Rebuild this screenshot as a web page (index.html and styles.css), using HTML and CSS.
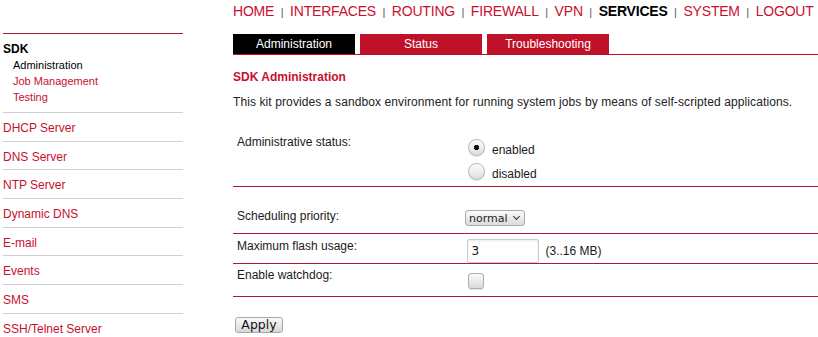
FILE: index.html
```html
<!DOCTYPE html>
<html lang="en">

<head>
    <meta charset="UTF-8">
    <meta name="viewport" content="width=device-width, initial-scale=1.0">
    <title>SDK Administration</title>
    <link rel="stylesheet" href="styles.css">
</head>

<body>
    <div class="page">
        <aside class="sidebar">
            <div class="menu-group">
                <div class="group-title">SDK</div>
                <a class="sub-item active" href="#">Administration</a>
                <a class="sub-item" href="#">Job Management</a>
                <a class="sub-item" href="#">Testing</a>
            </div>
            <a class="menu-item" href="#">DHCP Server</a>
            <a class="menu-item" href="#">DNS Server</a>
            <a class="menu-item" href="#">NTP Server</a>
            <a class="menu-item" href="#">Dynamic DNS</a>
            <a class="menu-item" href="#">E-mail</a>
            <a class="menu-item" href="#">Events</a>
            <a class="menu-item" href="#">SMS</a>
            <a class="menu-item" href="#">SSH/Telnet Server</a>
        </aside>

        <main class="content">
            <nav class="topnav">
                <a href="#">HOME</a><span class="sep">|</span>
                <a href="#">INTERFACES</a><span class="sep">|</span>
                <a href="#">ROUTING</a><span class="sep">|</span>
                <a href="#">FIREWALL</a><span class="sep">|</span>
                <a href="#">VPN</a><span class="sep">|</span>
                <a class="current" href="#">SERVICES</a><span class="sep">|</span>
                <a href="#">SYSTEM</a><span class="sep">|</span>
                <a href="#">LOGOUT</a>
            </nav>

            <div class="tabs">
                <a class="tab active" href="#">Administration</a>
                <a class="tab" href="#">Status</a>
                <a class="tab" href="#">Troubleshooting</a>
            </div>

            <h2>SDK Administration</h2>
            <p class="intro">This kit provides a sandbox environment for running system jobs by means of self-scripted applications.</p>

            <form class="settings">
                <div class="row row-status">
                    <label class="row-label">Administrative status:</label>
                    <div class="row-value options">
                        <label class="option"><input type="radio" name="status" checked> enabled</label>
                        <label class="option"><input type="radio" name="status"> disabled</label>
                    </div>
                </div>

                <div class="row row-priority">
                    <label class="row-label">Scheduling priority:</label>
                    <div class="row-value">
                        <span class="select-wrap">
                            <select>
                                <option>normal</option>
                                <option>high</option>
                                <option>low</option>
                            </select>
                        </span>
                    </div>
                </div>

                <div class="row row-flash">
                    <label class="row-label">Maximum flash usage:</label>
                    <div class="row-value inline">
                        <input type="text" value="3">
                        <span class="hint">(3..16 MB)</span>
                    </div>
                </div>

                <div class="row row-watchdog">
                    <label class="row-label">Enable watchdog:</label>
                    <div class="row-value">
                        <input type="checkbox">
                    </div>
                </div>

                <button type="submit">Apply</button>
            </form>
        </main>
    </div>
</body>

</html>
```

FILE: styles.css
```css
:root {
    --red: #c8102e;
    --red-dark: #b3172e;
    --tab-red: #bf1229;
    --text: #1a1a1a;
    --gray-line: #cfcfcf;
    --widget-border: #a9a9a9;
}

body {
    font-family: "Liberation Sans", Arial, sans-serif;
    background-color: #fff;
    color: var(--text);
    margin: 0;
    padding: 0;
}

a {
    text-decoration: none;
    color: var(--red);
}

.page {
    display: flex;
    width: 818px;
}

/* left menu */

.sidebar {
    width: 180px;
    margin-left: 3px;
    padding-top: 33px;
    font-size: 12px;
}

.menu-group {
    border-top: 1px solid var(--red-dark);
    border-bottom: 1px solid var(--gray-line);
    padding: 7.5px 0 7px;
}

.group-title {
    font-weight: bold;
    line-height: 14px;
    color: #000;
    margin-bottom: 1.5px;
}

.sub-item {
    display: block;
    padding-left: 10px;
    font-size: 11px;
    line-height: 16px;
}

.sub-item.active {
    color: #000;
}

.menu-item {
    display: block;
    line-height: 14px;
    padding: 8px 0 5.7px;
    border-bottom: 1px solid var(--gray-line);
}

/* main column */

.content {
    margin-left: 50px;
    width: 585px;
}

.topnav {
    display: flex;
    align-items: baseline;
    padding-top: 1.5px;
    font-size: 14px;
    line-height: 18px;
    letter-spacing: -0.2px;
    white-space: nowrap;
}

.topnav .current {
    color: #000;
    font-weight: bold;
}

.topnav .sep {
    font-size: 11px;
    letter-spacing: 0;
    color: #555;
    margin: 0 6.5px;
}

.tabs {
    display: flex;
    gap: 5px;
    margin-top: 13.5px;
    border-bottom: 1px solid var(--tab-red);
}

.tab {
    width: 122px;
    height: 20px;
    line-height: 20px;
    text-align: center;
    font-size: 12px;
    color: #fff;
    background-color: var(--tab-red);
}

.tab.active {
    background-color: #000;
}

h2 {
    font-size: 12px;
    line-height: 14px;
    color: var(--red);
    margin: 14.5px 0 0;
}

.intro {
    font-size: 12px;
    line-height: 14px;
    letter-spacing: 0.1px;
    color: #222;
    margin: 11px 0 0;
}

/* settings form */

.settings {
    margin-top: 21.3px;
    font-size: 12px;
}

.row {
    display: flex;
    align-items: flex-start;
    padding-top: 5px;
    border-bottom: 1px solid var(--red-dark);
}

.row-label {
    width: 228px;
    padding-left: 4px;
    line-height: 14px;
}

.row-status .options {
    padding-top: 3.4px;
}

.option {
    display: flex;
    align-items: center;
    height: 24px;
}

input[type="radio"] {
    appearance: none;
    width: 17px;
    height: 17px;
    margin: 0 7px 6px 3px;
    border: 1px solid #b4b4b4;
    border-radius: 50%;
    background: linear-gradient(#fdfdfd, #dedede);
    box-shadow: 0 1px 1px rgba(0, 0, 0, 0.12);
}

input[type="radio"]:checked {
    background: radial-gradient(circle, #111 0 2.3px, transparent 3px), linear-gradient(#fdfdfd, #dedede);
}

.row-priority {
    padding-top: 22px;
    padding-bottom: 7px;
}

.row-priority .row-value {
    padding-top: 1.3px;
}

.select-wrap {
    position: relative;
    display: inline-block;
}

.select-wrap::after {
    content: "";
    position: absolute;
    right: 6px;
    top: 4px;
    width: 4px;
    height: 4px;
    border-right: 1.3px solid #333;
    border-bottom: 1.3px solid #333;
    transform: rotate(45deg);
    pointer-events: none;
}

select {
    appearance: none;
    display: block;
    width: 60px;
    height: 16px;
    margin: 0;
    padding: 0 0 0 3px;
    font-family: "DejaVu Sans", sans-serif;
    font-size: 11px;
    color: #222;
    border: 1px solid var(--widget-border);
    border-radius: 3px;
    background: linear-gradient(#fafafa, #dcdcdc);
}

.row-flash {
    padding-top: 4.3px;
    padding-bottom: 0.7px;
}

.row-value.inline {
    display: flex;
    align-items: center;
}

input[type="text"] {
    width: 72px;
    height: 24px;
    box-sizing: border-box;
    margin: 0 0 0 1.5px;
    padding: 0 4px;
    font-family: "DejaVu Sans", sans-serif;
    font-size: 12px;
    color: #111;
    border: 1px solid #cacaca;
    border-radius: 2px;
    box-shadow: inset 0 1px 2px rgba(0, 0, 0, 0.08);
}

.hint {
    margin-left: 7px;
}

.row-watchdog {
    padding-top: 4px;
    padding-bottom: 7px;
}

input[type="checkbox"] {
    appearance: none;
    display: block;
    width: 16px;
    height: 16px;
    margin: 4.7px 0 0 2.5px;
    border: 1px solid #adadad;
    border-radius: 3px;
    background: linear-gradient(#fbfbfb, #d9d9d9);
    box-shadow: 0 1px 1px rgba(0, 0, 0, 0.1);
}

button {
    display: block;
    width: 48px;
    height: 16px;
    margin: 20px 0 0 2px;
    padding: 0;
    font-family: "DejaVu Sans", sans-serif;
    font-size: 12.5px;
    line-height: 14px;
    color: #111;
    border: 1px solid var(--widget-border);
    border-radius: 3px;
    background: linear-gradient(#fafafa, #d8d8d8);
    cursor: pointer;
}
```
